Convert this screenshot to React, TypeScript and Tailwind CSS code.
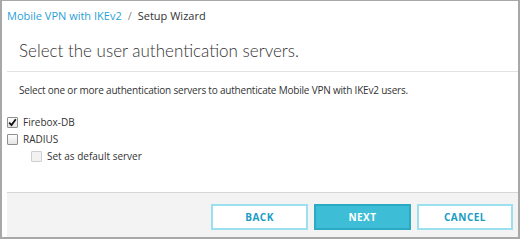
function Box({ checked, disabled }: { checked?: boolean; disabled?: boolean }) {
  return (
    <span
      className={
        disabled
          ? "w-[11px] h-[11px] border border-[#cfcfcf] bg-[#f2f2f2] rounded-[1px] shrink-0"
          : "w-[11px] h-[11px] border border-[#8f8f8f] bg-gradient-to-b from-[#fdfdfd] to-[#e4e4e4] rounded-[1px] shrink-0 flex items-center justify-center"
      }
    >
      {checked && (
        <svg width="9" height="9" viewBox="0 0 9 9">
          <path d="M1.2 4.6 L3.5 7 L7.8 1.2" fill="none" stroke="#111" strokeWidth="1.8" />
        </svg>
      )}
    </span>
  );
}

export default function App() {
  return (
    <div className="w-[520px] h-[240px] bg-white overflow-hidden font-['Open_Sans',sans-serif]">
      <div className="h-[239px] border-t border-l-2 border-r-2 border-b-2 border-[#a8a8a8] flex flex-col pl-[5px]">
        {/* breadcrumb */}
        <div className="h-[30px] flex items-center text-[11px] gap-[6px] pt-[1px]">
          <span className="text-[#2a9fd6]">Mobile VPN with IKEv2</span>
          <span className="text-[#8a8a8a]">/</span>
          <span className="text-[#333]">Setup Wizard</span>
        </div>

        {/* title */}
        <div className="h-[41px] flex items-center pl-[12px] border-b border-[#e2e2e2]">
          <h1 className="font-['Lato',sans-serif] font-light text-[17px] text-[#333]">
            Select the user authentication servers.
          </h1>
        </div>

        <div className="flex-1 flex flex-col text-[10px] text-[#333]">
          <p className="pl-[12px] mt-[11px] tracking-[-0.2px]">
            Select one or more authentication servers to authenticate Mobile VPN with IKEv2 users.
          </p>

          <div className="mt-[18px] flex flex-col gap-[4px]">
            <label className="flex items-center gap-[5px] h-[13px]">
              <Box checked />
              <span>Firebox-DB</span>
            </label>
            <label className="flex items-center gap-[5px] h-[13px]">
              <Box />
              <span>RADIUS</span>
            </label>
            <label className="flex items-center gap-[5px] h-[13px] pl-[24px]">
              <Box disabled />
              <span>Set as default server</span>
            </label>
          </div>
        </div>

        {/* footer */}
        <div className="h-[45px] bg-[#f3f3f3] border-t border-[#d6d6d6] flex items-start justify-end gap-[6px] pr-[5px] pt-[11px]">
          <button className="w-[97px] h-[26px] bg-white border-2 border-[#9ae0ee] text-[#1a9cc4] text-[10px] font-bold tracking-[0.5px]">
            BACK
          </button>
          <button className="w-[97px] h-[26px] bg-[#3dbdd6] border-2 border-[#2baac4] text-white text-[10px] font-bold tracking-[0.5px]">
            NEXT
          </button>
          <button className="w-[96px] h-[26px] bg-white border-2 border-[#9ae0ee] text-[#1a9cc4] text-[10px] font-bold tracking-[0.5px]">
            CANCEL
          </button>
        </div>
      </div>
    </div>
  );
}
